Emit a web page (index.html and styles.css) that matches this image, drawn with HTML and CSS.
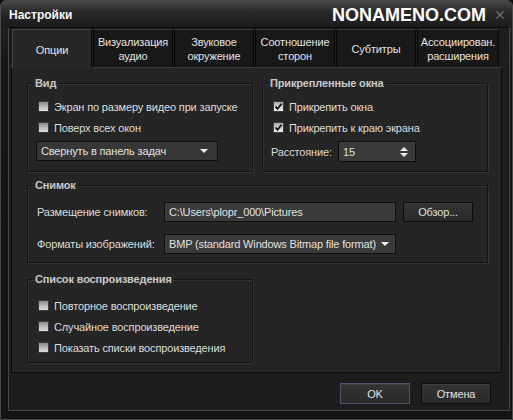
FILE: index.html
```html
<!DOCTYPE html>
<html>
<head>
<meta charset="utf-8">
<link rel="stylesheet" href="styles.css">
</head>
<body>
<div class="window">
  <div class="titlebar">
    <span class="title">Настройки</span>
    <span class="brand">NONAMENO.COM</span>
    <span class="close">&#x2715;</span>
  </div>
  <div class="client">
    <div class="tabs">
      <div class="tab active">Опции</div>
      <div class="tab">Визуализация<br>аудио</div>
      <div class="tab">Звуковое<br>окружение</div>
      <div class="tab">Соотношение<br>сторон</div>
      <div class="tab">Субтитры</div>
      <div class="tab">Ассоциирован.<br>расширения</div>
    </div>
    <div class="panel">
      <fieldset class="group">
        <legend>Вид</legend>
        <div class="row"><span class="cb"></span>Экран по размеру видео при запуске</div>
        <div class="row"><span class="cb"></span>Поверх всех окон</div>
        <div class="select small">Свернуть в панель задач<span class="arrow"></span></div>
      </fieldset>
      <fieldset class="group">
        <legend>Прикрепленные окна</legend>
        <div class="row"><span class="cb checked"><svg viewBox="0 0 9 9" width="9" height="9"><path d="M1.5 4.5 L3.5 6.8 L7.6 1.8" fill="none" stroke="#111" stroke-width="1.8"/></svg></span>Прикрепить окна</div>
        <div class="row"><span class="cb checked"><svg viewBox="0 0 9 9" width="9" height="9"><path d="M1.5 4.5 L3.5 6.8 L7.6 1.8" fill="none" stroke="#111" stroke-width="1.8"/></svg></span>Прикрепить к краю экрана</div>
        <div class="spinrow">
          <span class="lbl">Расстояние:</span>
          <div class="spin">15<span class="spinbtn"><span class="up"></span><span class="down"></span></span></div>
        </div>
      </fieldset>
      <fieldset class="group wide">
        <legend>Снимок</legend>
        <div class="frow">
          <span class="flabel">Размещение снимков:</span>
          <div class="input">C:\Users\plopr_000\Pictures</div>
          <div class="btn browse">Обзор...</div>
        </div>
        <div class="frow">
          <span class="flabel">Форматы изображений:</span>
          <div class="select fmt">BMP (standard Windows Bitmap file format)<span class="arrow"></span></div>
        </div>
      </fieldset>
      <fieldset class="group playlist">
        <legend>Список воспроизведения</legend>
        <div class="row"><span class="cb"></span>Повторное воспроизведение</div>
        <div class="row"><span class="cb"></span>Случайное воспроизведение</div>
        <div class="row"><span class="cb"></span>Показать списки воспроизведения</div>
      </fieldset>
    </div>
    <div class="footer">
      <div class="btn ok">OK</div>
      <div class="btn">Отмена</div>
    </div>
  </div>
</div>
</body>
</html>
```
FILE: styles.css
```css
html, body {
  margin: 0;
  padding: 0;
  background: #0e0e0e;
}
body {
  width: 513px;
  height: 420px;
  overflow: hidden;
  font-family: "Liberation Sans", Arial, sans-serif;
  font-size: 11px;
  letter-spacing: -0.15px;
  color: #dcdcdc;
}
.window {
  width: 513px;
  height: 420px;
  box-sizing: border-box;
  border: 1px solid #4a4a4a;
  border-radius: 6px 6px 0 0;
  background: linear-gradient(#2c2c2c, #161616 60px, #141414);
  display: flex;
  flex-direction: column;
}
.titlebar {
  height: 26px;
  flex: none;
  display: flex;
  align-items: center;
  padding: 0 6px 0 8px;
  background: linear-gradient(#474747, #2a2a2a 40%, #1b1b1b);
  border-radius: 5px 5px 0 0;
  letter-spacing: 0;
}
.title {
  font-weight: bold;
  font-size: 12px;
  color: #f4f4f4;
  flex: 1;
  padding-top: 2px;
}
.brand {
  font-weight: bold;
  font-size: 18px;
  color: #ffffff;
  margin-right: 8px;
  padding-top: 3px;
}
.close {
  color: #6c6c6c;
  font-size: 14px;
  padding-top: 2px;
}
.client {
  margin: 0 2px 8px 7px;
  flex: 1;
  border: 1px solid #474747;
  border-top-color: #0a0a0a;
  background: #1d1d1d;
  padding: 1px 0 0 2px;
  display: flex;
  flex-direction: column;
}
.tabs {
  display: flex;
  gap: 1px;
  margin-left: 1px;
  height: 38px;
}
.tab {
  width: 80px;
  box-sizing: border-box;
  height: 38px;
  border: 1px solid #070707;
  border-top-color: #383838;
  border-bottom: none;
  background: #181818;
  display: flex;
  align-items: center;
  justify-content: center;
  text-align: center;
  line-height: 14px;
  color: #e2e2e2;
  padding-top: 1px;
}
.tab.active {
  background: #272727;
  border-color: #444;
  border-right-color: #0a0a0a;
  position: relative;
  z-index: 1;
  height: 39px;
}
.tab:last-child { width: 82px; }
.panel {
  width: 491px;
  box-sizing: border-box;
  border: 1px solid #0b0b0b;
  border-top-color: #3a3a3a;
  background: #252525;
  padding: 8px 14px 9px 15px;
  display: grid;
  grid-template-columns: 226px 226px;
  column-gap: 9px;
  row-gap: 6px;
  align-content: start;
  height: 306px;
}
.group {
  margin: 0;
  padding: 6px 8px 9px 8px;
  border: 1px solid #141414;
  box-shadow: inset 1px 1px 0 #333, 1px 1px 0 #333;
  min-width: 0;
}
.group legend {
  font-weight: bold;
  color: #c8c8c8;
  line-height: 14px;
  padding: 0 2px;
  margin-left: -3px;
}
.group.wide {
  grid-column: 1 / 3;
  padding: 10px 8px 8px 8px;
  margin-top: 0;
}
.group.playlist {
  margin-top: 3px;
  padding: 9px 8px 4px 8px;
}
.row {
  height: 21px;
  display: flex;
  align-items: center;
  padding-left: 2px;
  white-space: nowrap;
}
.cb {
  width: 11px;
  height: 11px;
  box-sizing: border-box;
  border: 1px solid #3a3a3a;
  background: linear-gradient(#8a8a8a, #bdbdbd 55%, #dedede);
  margin-right: 5px;
  flex: none;
  display: flex;
  align-items: center;
  justify-content: center;
}
.cb.checked {
  background: linear-gradient(#a8a8a8, #d6d6d6 55%, #ececec);
}
.cb svg { display: block; }
.select, .input, .spin {
  height: 20px;
  box-sizing: border-box;
  border: 1px solid #0f0f0f;
  background: #3a3a3a;
  display: flex;
  align-items: center;
  padding-left: 4px;
  white-space: nowrap;
  color: #e0e0e0;
}
.select.small {
  margin-top: 3px;
  width: 182px;
  background: #363636;
}
.arrow {
  margin-left: auto;
  margin-right: 9px;
  width: 0;
  height: 0;
  border-left: 4px solid transparent;
  border-right: 4px solid transparent;
  border-top: 4px solid #f0f0f0;
}
.spinrow {
  margin-top: 3px;
  height: 21px;
  display: flex;
  align-items: center;
}
.lbl {
  width: 67px;
  color: #d8d8d8;
}
.spin {
  width: 78px;
  height: 21px;
  padding-left: 4px;
}
.spinbtn {
  margin-left: auto;
  margin-right: 7px;
  display: flex;
  flex-direction: column;
  gap: 2px;
}
.up {
  width: 0; height: 0;
  border-left: 4px solid transparent;
  border-right: 4px solid transparent;
  border-bottom: 4px solid #e8e8e8;
}
.down {
  width: 0; height: 0;
  border-left: 4px solid transparent;
  border-right: 4px solid transparent;
  border-top: 4px solid #e8e8e8;
}
.frow {
  display: flex;
  align-items: center;
  height: 20px;
}
.frow + .frow { margin-top: 12px; }
.flabel {
  width: 127px;
  padding-left: 1px;
  flex: none;
}
.input, .select.fmt {
  width: 232px;
}
.select.fmt .arrow { margin-right: 6px; }
.btn {
  width: 70px;
  height: 21px;
  box-sizing: border-box;
  border: 1px solid #0d0d0d;
  background: linear-gradient(#343434, #2a2a2a);
  box-shadow: inset 0 1px 0 #3e3e3e;
  display: flex;
  align-items: center;
  justify-content: center;
  color: #e0e0e0;
}
.btn.browse {
  margin-left: 7px;
  height: 20px;
}
.footer {
  display: flex;
  justify-content: flex-end;
  gap: 11px;
  padding: 10px 11px 0 0;
  width: 491px;
  box-sizing: border-box;
}
.btn.ok {
  border-color: #4c5670;
}
```
